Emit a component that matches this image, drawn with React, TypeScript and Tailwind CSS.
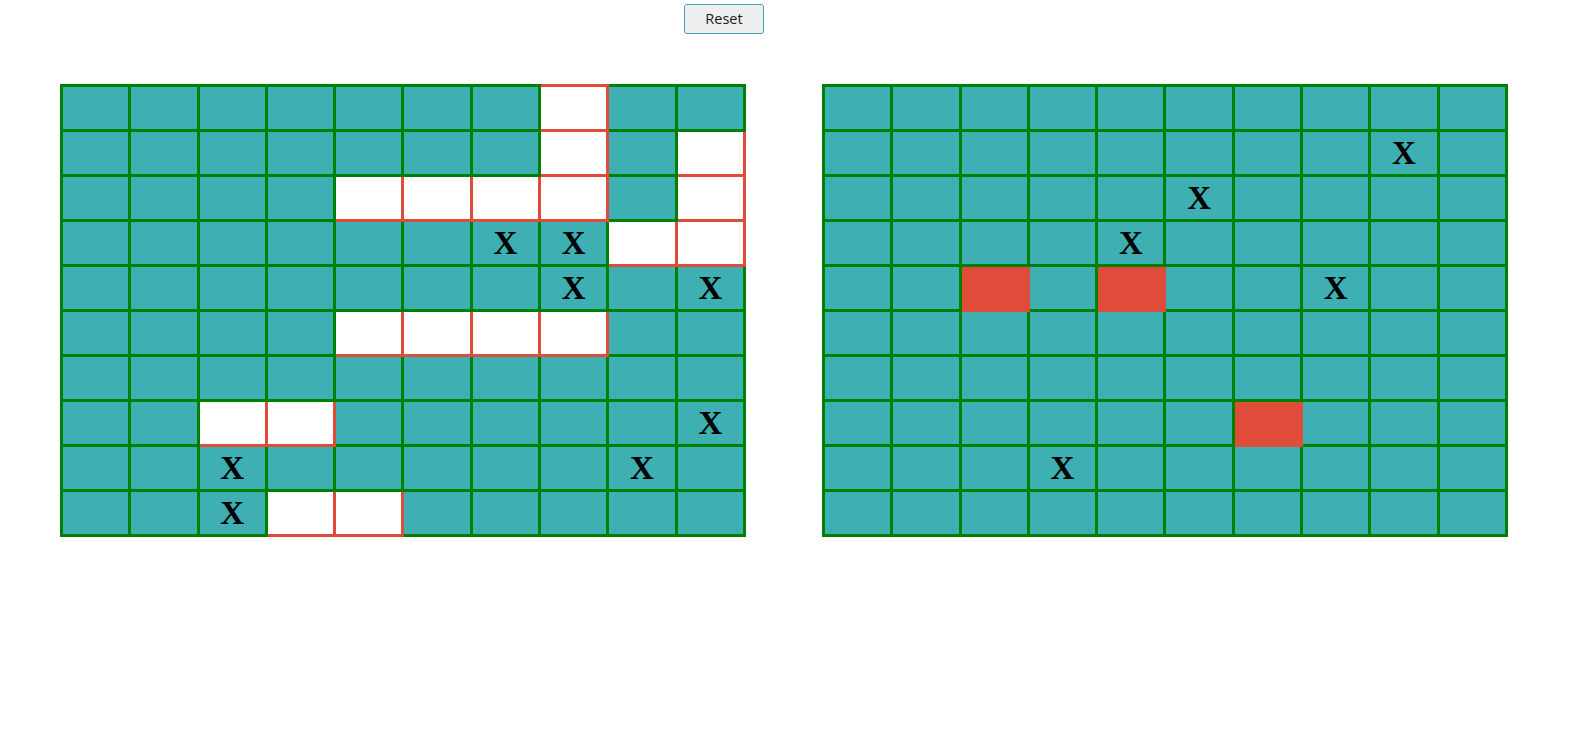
import React, { useState } from 'react';

type Mark = '' | 'W' | 'X' | 'R';

// W = revealed (white), X = hit, R = sunk (red)
const leftBoard: string[] = [
  '.......W..',
  '.......W.W',
  '....WWWW.W',
  '......XXWW',
  '.......X.X',
  '....WWWW..',
  '..........',
  '..WW.....X',
  '..X.....X.',
  '..XWW.....',
];

const rightBoard: string[] = [
  '..........',
  '........X.',
  '.....X....',
  '....X.....',
  '..R.R..X..',
  '..........',
  '..........',
  '......R...',
  '...X......',
  '..........',
];

const parse = (rows: string[]): Mark[][] =>
  rows.map(r => r.split('').map(c => (c === '.' ? '' : (c as Mark))));

const Cell = ({ mark }: { mark: Mark }) => {
  let cls = 'bg-[#3eafb3] border-[#008000]';
  if (mark === 'W') cls = 'bg-white border-[#df4d3a]';
  if (mark === 'R') cls = 'bg-[#df4d3a] border-[#df4d3a]';
  return (
    <td className={`border-[3px] border-solid p-0 text-center align-middle ${cls}`}>
      {mark === 'X' && (
        <span className="font-['Liberation_Serif',serif] text-[33px] font-bold leading-none text-black">X</span>
      )}
    </td>
  );
};

const Board = ({ cells }: { cells: Mark[][] }) => (
  <table className="w-[686px] table-fixed border-collapse">
    <tbody>
      {cells.map((row, i) => (
        <tr key={i} className="h-[45px]">
          {row.map((m, j) => (
            <Cell key={j} mark={m} />
          ))}
        </tr>
      ))}
    </tbody>
  </table>
);

export default function App() {
  const [left, setLeft] = useState(() => parse(leftBoard));
  const [right, setRight] = useState(() => parse(rightBoard));

  const reset = () => {
    setLeft(parse(leftBoard));
    setRight(parse(rightBoard));
  };

  return (
    <div className="min-h-[748px] bg-white">
      <button
        onClick={reset}
        className="ml-[684px] mt-[4px] h-[30px] w-[80px] rounded-[3px] border border-[#3aa9ae] bg-[#efefef] font-['Open_Sans',sans-serif] text-[14.5px] text-[#1a1a1a]"
      >
        Reset
      </button>
      <div className="mt-[50px] flex gap-[76px] pl-[60px]">
        <Board cells={left} />
        <Board cells={right} />
      </div>
    </div>
  );
}
